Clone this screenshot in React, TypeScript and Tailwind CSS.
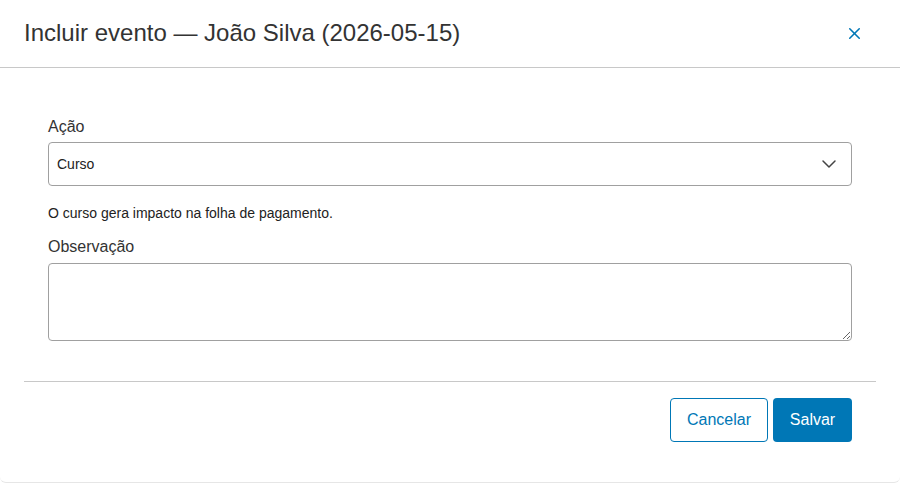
import { X, ChevronDown } from 'lucide-react';

export default function App() {
  return (
    <div className="w-[900px] h-[483px] bg-white font-['Liberation_Sans',Arial,sans-serif] text-[#333]">
      <div className="h-[483px] flex flex-col border-b border-[#e6e6e6] rounded-b-md">
        {/* Header */}
        <div className="h-[68px] shrink-0 flex items-center justify-between pl-6 pr-[36px] border-b border-[#c8c8c8]">
          <h1 className="text-[24px] leading-[28px] text-[#333] -mt-[1px]">Incluir evento — João Silva (2026-05-15)</h1>
          <button className="text-[#0077b6]">
            <X className="w-[19px] h-[19px]" strokeWidth={2} />
          </button>
        </div>

        {/* Body */}
        <div className="px-12 pt-[50px]">
          <label className="block text-base leading-[18px] text-[#333]">Ação</label>
          <div className="mt-[6px] h-[44px] flex items-center justify-between border border-[#a0a0a0] rounded pl-2 pr-[10px]">
            <span className="text-[14px] text-[#222]">Curso</span>
            <ChevronDown className="w-6 h-6 text-[#444]" strokeWidth={1.5} />
          </div>
          <p className="mt-[19px] text-[14px] leading-[17px] text-[#222]">O curso gera impacto na folha de pagamento.</p>
          <label className="block mt-[16px] text-base leading-[18px] text-[#333]">Observação</label>
          <textarea className="block mt-[7px] w-full h-[78px] border border-[#a0a0a0] rounded resize-y outline-none" />
        </div>

        {/* Footer */}
        <div className="mx-6 mt-[40px] border-t border-[#c8c8c8] pt-4 pr-6 flex justify-end gap-[5px]">
          <button className="w-[98px] h-[44px] border border-[#0077b6] rounded text-[#0077b6] text-base">Cancelar</button>
          <button className="w-[79px] h-[44px] bg-[#0077b6] rounded text-white text-base">Salvar</button>
        </div>
      </div>
    </div>
  );
}
